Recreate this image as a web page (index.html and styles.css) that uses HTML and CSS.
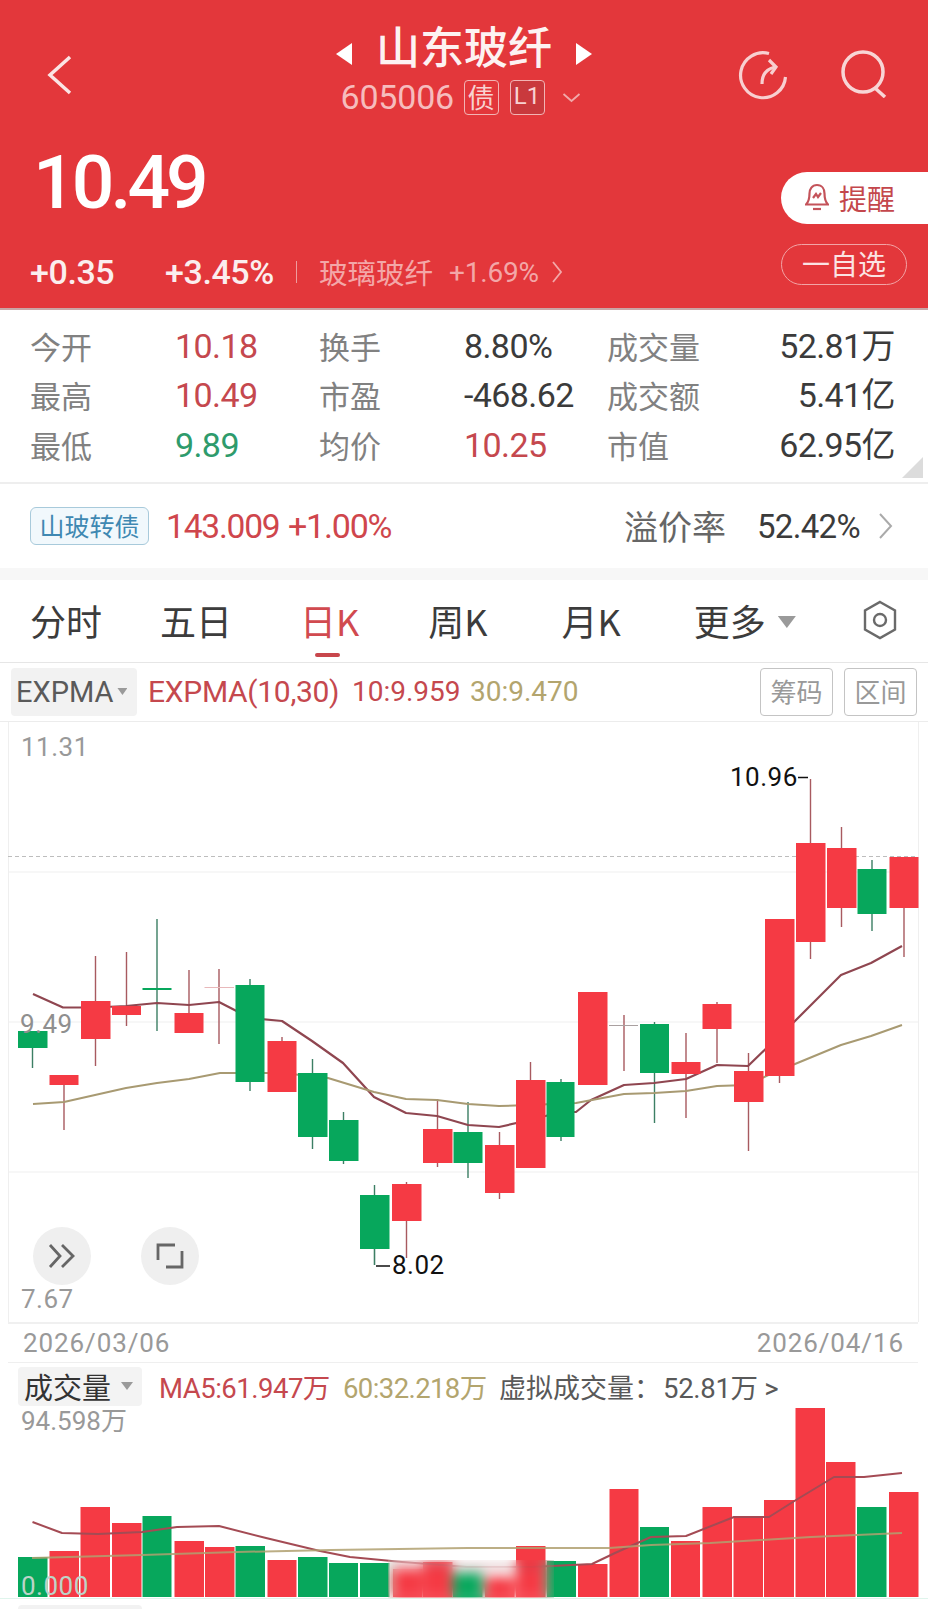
FILE: index.html
```html
<!DOCTYPE html>
<html lang="zh">
<head>
<meta charset="utf-8">
<title>山东玻纤</title>
<link rel="stylesheet" href="styles.css">
</head>
<body>
<div class="page">
  <header class="header">
    <div class="topbar">
      <svg class="back" viewBox="0 0 26 40"><path d="M23 2 3 20l20 18"/></svg>
      <div class="titlebox">
        <div class="titlerow">
          <span class="tri-l"></span>
          <h1 class="title">山东玻纤</h1>
          <span class="tri-r"></span>
        </div>
        <div class="subrow">
          <span class="code">605006</span>
          <span class="badge">债</span>
          <span class="badge badge-dark">L1</span>
          <svg class="sub-chev" viewBox="0 0 20 11"><path d="M2 2l8 7 8-7"/></svg>
        </div>
      </div>
      <div class="actions">
        <svg class="icon-refresh" viewBox="0 0 50 50"><path d="M31 3.500A22.500 22.500 0 1 0 47.500 27"/><path d="M24 34C24 25 28 19 37 17"/><path d="M31 10l7 7-5 7"/></svg>
        <svg class="icon-search" viewBox="0 0 48 48"><circle cx="23" cy="22" r="20"/><path d="M35 38l10 9"/></svg>
      </div>
    </div>
    <div class="quote">
      <div class="quote-left">
        <div class="price">10.49</div>
        <div class="changes">
          <span class="chg chg-a">+0.35</span>
          <span class="chg chg-b">+3.45%</span>
          <span class="sep"></span>
          <span class="sector">玻璃玻纤</span>
          <span class="sector-pct">+1.69%</span>
          <svg class="sector-chev" viewBox="0 0 10 22"><path d="M1 1l8 10-8 10"/></svg>
        </div>
      </div>
      <div class="quote-right">
        <div class="pill-alert">
          <svg class="bell" viewBox="0 0 24 30"><path d="M12 2c5 0 7.500 4 7.500 8.500 0 5 .5 8 3.500 11H1c3-3 3.500-6 3.500-11C4.500 6 7 2 12 2z"/><path d="M8 26h8"/><path d="M8 15l3-4 2 3 3-4"/></svg>
          <span>提醒</span>
        </div>
        <div class="pill-watch">一自选</div>
      </div>
    </div>
  </header>

  <section class="stats">
    <span class="lab">今开</span><span class="val up">10.18</span>
    <span class="lab">换手</span><span class="val">8.80%</span>
    <span class="lab">成交量</span><span class="val end">52.81万</span>
    <span class="lab">最高</span><span class="val up">10.49</span>
    <span class="lab">市盈</span><span class="val">-468.62</span>
    <span class="lab">成交额</span><span class="val end">5.41亿</span>
    <span class="lab">最低</span><span class="val down">9.89</span>
    <span class="lab">均价</span><span class="val up">10.25</span>
    <span class="lab">市值</span><span class="val end">62.95亿</span>
    <span class="corner"></span>
  </section>

  <section class="bond">
    <span class="bond-tag">山玻转债</span>
    <span class="bond-price">143.009</span>
    <span class="bond-pct">+1.00%</span>
    <span class="bond-prem">溢价率</span>
    <span class="bond-rate">52.42%</span>
    <svg class="bond-chev" viewBox="0 0 14 26"><path d="M1 1l11 12L1 25"/></svg>
  </section>

  <nav class="tabs">
    <span class="tab tab-1">分时</span>
    <span class="tab tab-2">五日</span>
    <span class="tab tab-3 active">日K</span>
    <span class="tab tab-4">周K</span>
    <span class="tab tab-5">月K</span>
    <span class="tab tab-6">更多</span>
    <span class="tab-tri"></span>
    <svg class="hex" viewBox="0 0 36 40"><path d="M18 2l15 8.500v19L18 38 3 29.500v-19z"/><circle cx="18" cy="20" r="6"/></svg>
  </nav>

  <div class="indicator">
    <div class="ind-select"><span>EXPMA</span><i class="mini-tri"></i></div>
    <span class="ind-a">EXPMA(10,30)</span>
    <span class="ind-b">10:9.959</span>
    <span class="ind-c">30:9.470</span>
    <span class="ind-btn ind-btn-1">筹码</span>
    <span class="ind-btn">区间</span>
  </div>

  <div class="chart">
    <svg class="chart-svg" viewBox="0 722 928 600">
      <g class="grid">
        <path d="M8.500 722V1322M918.500 722V1322"/>
        <path d="M8 872H918M8 1022H918M8 1172H918"/>
      </g>
      <path class="dash" d="M8 856.500H918"/>
      <path class="wick-r" d="M95.500 956V1066M126.500 952V1026M189 970V1013M219 969V1044M64 1085V1130M282 1037V1041M406.500 1182V1258M437.500 1099V1167M499.500 1132V1199M530.500 1062V1080M686 1033V1118M717 1002V1063M748.500 1053V1151M779.500 1076V1083M810.500 779V959M841.500 827V927M904 908V957M624 1015V1071"/>
      <path class="wick-g" d="M32.500 1048V1068M157 919V1031M250 979V1091M312.500 1059V1149M343.500 1112V1164M374.500 1185V1265M468 1102V1178M561 1079V1141M654.500 1022V1123M872 860V931"/>
      <path class="ma10" d="M33 994 63 1007.500 95 1007.500 126 1006 157 1003 189 1005 219 1002 250 1018 282 1021 312 1041 343 1063 374 1097 406 1113 437 1116 468 1125 499 1127 530 1120 561 1112 576 1112 591 1100 624 1085 654 1083 686 1079 717 1065 748 1066 779 1036 794 1022 811 1005 841 975 871 963 902 946"/>
      <path class="ma30" d="M33 1104 64 1102 95 1095 126 1088 157 1083 189 1079 220 1073 235 1073 282 1073 328 1078 374 1092 406 1099 437 1100 468 1104 499 1106 530 1105 576 1103 592 1100 624 1094 654 1093 686 1091 717 1086 748 1085 779 1070 795 1064 841 1045 871 1036 902 1025"/>
      <g class="red">
        <rect x="49.500" y="1075" width="29" height="10"/>
        <rect x="81" y="1001" width="29.500" height="38"/>
        <rect x="112" y="1006" width="29" height="9"/>
        <rect x="174.500" y="1013" width="29" height="20"/>
        <rect x="267.500" y="1041" width="29" height="51"/>
        <rect x="392" y="1184" width="29.500" height="37"/>
        <rect x="423" y="1129" width="29.500" height="34"/>
        <rect x="485" y="1145" width="29.500" height="48"/>
        <rect x="516" y="1080" width="29.500" height="88"/>
        <rect x="578" y="992" width="29.500" height="93"/>
        <rect x="671.500" y="1062" width="29" height="12"/>
        <rect x="702.500" y="1004" width="29" height="25"/>
        <rect x="734" y="1071" width="29.500" height="31"/>
        <rect x="765" y="919" width="29.500" height="157"/>
        <rect x="796" y="843" width="29.500" height="99"/>
        <rect x="827" y="848" width="29.500" height="60"/>
        <rect x="889.500" y="857" width="29" height="51"/>
      </g>
      <g class="green">
        <rect x="18" y="1031" width="29.500" height="17"/>
        <rect x="142.500" y="988" width="29" height="2"/>
        <rect x="235.500" y="985" width="29" height="97"/>
        <rect x="298" y="1073" width="29.500" height="64"/>
        <rect x="329" y="1120" width="29.500" height="41"/>
        <rect x="360" y="1195" width="29.500" height="54"/>
        <rect x="453.500" y="1132" width="29" height="31"/>
        <rect x="546.500" y="1082" width="28" height="55"/>
        <rect x="640" y="1024" width="29" height="49"/>
        <rect x="857.500" y="869" width="29" height="45"/>
      </g>
      <path class="doji-a" d="M204.500 987.500H234"/>
      <path class="doji-b" d="M609 1025.500H638"/>
      <path class="tick" d="M798 777.500H808M376 1266H390"/>
      <path class="tick-thin" d="M374.500 1249V1265"/>
    </svg>
    <span class="axis axis-high">11.31</span>
    <span class="axis axis-mid">9.49</span>
    <span class="axis axis-low">7.67</span>
    <span class="mark mark-high">10.96</span>
    <span class="mark mark-low">8.02</span>
    <div class="round round-1">
      <svg viewBox="0 0 28 26"><path d="M2 2l10 11L2 24M14 2l11 11-11 11"/></svg>
    </div>
    <div class="round round-2">
      <svg viewBox="0 0 28 28"><path d="M19 3H2v15M10 25h16V9"/></svg>
    </div>
  </div>

  <div class="dates">
    <span>2026/03/06</span>
    <span>2026/04/16</span>
  </div>

  <div class="volhead">
    <div class="vol-select"><span>成交量</span><i class="vol-tri"></i></div>
    <span class="vol-a">MA5:61.947万</span>
    <span class="vol-b">60:32.218万</span>
    <span class="vol-c">虚拟成交量：</span>
    <span class="vol-d">52.81万 &gt;</span>
  </div>

  <div class="volume">
    <svg class="vol-svg" viewBox="0 1408 928 190">
      <g class="red">
        <rect x="49.500" y="1551" width="29.500" height="46"/>
        <rect x="80.500" y="1507" width="29.500" height="90"/>
        <rect x="112" y="1523" width="29.500" height="74"/>
        <rect x="174.500" y="1541" width="29.500" height="56"/>
        <rect x="205" y="1547" width="29.500" height="50"/>
        <rect x="267.500" y="1560" width="29" height="37"/>
        <rect x="393" y="1569" width="29.500" height="28"/>
        <rect x="423" y="1562" width="29.500" height="35"/>
        <rect x="485" y="1577" width="29.500" height="20"/>
        <rect x="516" y="1546" width="29.500" height="51"/>
        <rect x="578" y="1564" width="29.500" height="33"/>
        <rect x="609.500" y="1489" width="29" height="108"/>
        <rect x="671" y="1541" width="29" height="56"/>
        <rect x="702.500" y="1507" width="29.500" height="90"/>
        <rect x="733.500" y="1516" width="29.500" height="81"/>
        <rect x="764" y="1500" width="30" height="97"/>
        <rect x="795.500" y="1408" width="29.500" height="189"/>
        <rect x="826" y="1462" width="29.500" height="135"/>
        <rect x="889" y="1492" width="29.500" height="105"/>
      </g>
      <g class="green">
        <rect x="18" y="1557" width="29.500" height="40"/>
        <rect x="142.500" y="1516" width="29" height="81"/>
        <rect x="235.500" y="1546" width="29.500" height="51"/>
        <rect x="298" y="1557" width="29.500" height="40"/>
        <rect x="329" y="1563" width="29" height="34"/>
        <rect x="360" y="1563" width="29.500" height="34"/>
        <rect x="453" y="1573" width="29.500" height="24"/>
        <rect x="547" y="1561" width="29" height="36"/>
        <rect x="640" y="1527" width="29" height="70"/>
        <rect x="857" y="1507" width="29.500" height="90"/>
      </g>
      <path class="vma5" d="M32.500 1522 62 1533 98 1534 142 1532 177 1527 219 1526 266 1538 320 1551 350 1557 402 1562 467 1567 532 1567 592 1564 615 1553 651 1537 686 1536 734 1517 769 1517 796 1500 834 1477 864 1477 902 1473"/>
      <path class="vma60" d="M32 1558 142 1555 237 1552 331 1550 467 1548 609 1548 651 1545 710 1543 811 1537 902 1533"/>
    </svg>
    <span class="vol-max">94.598万</span>
    <span class="vol-min">0.000</span>
    <div class="smudge"></div>
  </div>
  <div class="footer"><span class="foot-box"></span></div>
</div>
</body>
</html>
```
FILE: styles.css
```css
* { box-sizing: border-box; }
html, body { margin: 0; padding: 0; background: #fff; }
body { font-family: "Roboto", "Noto Sans CJK SC", sans-serif; color: #333; }
.page { width: 928px; height: 1609px; overflow: hidden; position: relative; }
svg { display: block; fill: none; }

/* header */
.header { height: 310px; background: #e3373b; color: #fff; border-bottom: 2px solid #c9a5a5; }
.topbar { display: grid; grid-template-columns: 1fr auto 1fr; height: 125px; padding: 0 40px; }
.back { width: 26px; height: 40px; margin: 55px 0 0 7px; }
.back path { stroke: #fbe4e4; stroke-width: 3.5; }
.titlebox { display: flex; flex-direction: column; align-items: center; padding-top: 19px; }
.titlerow { display: flex; align-items: center; gap: 24px; height: 52px; }
.title { margin: 0; font: 500 44px/52px "Noto Sans CJK SC", sans-serif; color: #fdf2f2; }
.tri-l, .tri-r { width: 16px; height: 22px; margin-top: 18px; background: #fff; }
.tri-l { clip-path: polygon(100% 0, 100% 100%, 0 50%); }
.tri-r { clip-path: polygon(0 0, 100% 50%, 0 100%); }
.subrow { display: flex; align-items: center; height: 36px; margin-top: 8px; padding-right: 6px; }
.code { font-size: 34px; line-height: 36px; color: #f6bcbd; letter-spacing: -.2px; width: 123px; }
.badge { width: 35px; height: 35px; border: 1.5px solid #f2b4b4; border-radius: 4px; font: 400 27px/31px "Noto Sans CJK SC", Roboto, sans-serif; color: #f8d2d2; text-align: center; }
.badge-dark { margin-left: 11px; background: #c9393d; font-family: Roboto, sans-serif; font-size: 24px; }
.sub-chev { width: 21px; height: 11px; margin-left: 16px; }
.sub-chev path { stroke: #f1a9aa; stroke-width: 1.8; }
.actions { display: flex; justify-content: flex-end; gap: 52px; padding-top: 50px; }
.icon-refresh { width: 50px; height: 50px; }
.icon-refresh path { stroke: #f8cfd0; stroke-width: 3.2; }
.icon-search { width: 48px; height: 48px; }
.icon-search circle, .icon-search path { stroke: #f8d5d5; stroke-width: 3.5; }

.quote { display: flex; justify-content: space-between; height: 183px; }
.quote-left { padding-left: 30px; }
.price { height: 126px; padding: 15px 0 0 3px; font-size: 75px; line-height: 84px; font-weight: 500; letter-spacing: -3.9px; color: #fff; }
.changes { display: flex; align-items: center; height: 42px; font-size: 34px; font-weight: 500; letter-spacing: -.4px; }
.chg { color: #fbeeee; }
.chg-a { width: 135px; }
.chg-b { width: 131px; }
.sep { width: 1px; height: 22px; background: #ee9c9e; margin-right: 22px; }
.sector { font: 400 28.500px/42px "Noto Sans CJK SC", sans-serif; letter-spacing: 0; color: #f3a7a8; width: 130px; }
.sector-pct { font-size: 28px; font-weight: 400; letter-spacing: -.2px; color: #f3a7a8; width: 103px; }
.sector-chev { width: 10px; height: 22px; }
.sector-chev path { stroke: #f3a7a8; stroke-width: 1.8; }
.quote-right { display: flex; flex-direction: column; align-items: flex-end; width: 147px; padding-top: 47px; }
.pill-alert { display: flex; align-items: center; width: 147px; height: 52px; padding-left: 24px; background: #fff; border-radius: 26px 0 0 26px; color: #c4474c; font: 400 28px/52px "Noto Sans CJK SC", sans-serif; gap: 10px; }
.bell { width: 24px; height: 30px; }
.bell path { stroke: #c4535a; stroke-width: 2.2; }
.pill-watch { align-self: flex-start; width: 126px; height: 41px; margin-top: 20px; border: 1.5px solid #f2a4a6; border-radius: 21px; text-align: center; font: 400 28px/37px "Noto Sans CJK SC", sans-serif; color: #fbe3e3; }

/* stats */
.stats { position: relative; display: grid; grid-template-columns: 145px 144px 145px 143px 130px 1fr; grid-auto-rows: 49.5px; align-items: center; height: 174px; padding: 11px 33px 0 30px; border-bottom: 2px solid #eee; }
.lab { font: 400 31px/40px "Noto Sans CJK SC", sans-serif; color: #818181; }
.val { font-size: 34px; line-height: 40px; letter-spacing: -.6px; color: #3b3b3b; white-space: nowrap; }
.up { color: #c5484e; }
.down { color: #2e9b6c; }
.end { text-align: right; }
.corner { position: absolute; right: 5px; bottom: 4px; width: 21px; height: 21px; background: #dcdcdc; clip-path: polygon(100% 0, 100% 100%, 0 100%); }

/* bond */
.bond { display: flex; align-items: center; height: 96px; padding-left: 30px; border-bottom: 12px solid #f7f7f7; }
.bond-tag { width: 119px; height: 38px; border: 1px solid #a8cadb; border-radius: 6px; background: #f1f8fc; text-align: center; font: 400 25px/35px "Noto Sans CJK SC", sans-serif; color: #3f88b2; }
.bond-price { margin-left: 17px; width: 122px; font-size: 33.500px; letter-spacing: -1.2px; color: #cf464c; }
.bond-pct { width: 336px; font-size: 34px; letter-spacing: -1.2px; color: #cf464c; }
.bond-prem { width: 133px; font: 400 34px/44px "Noto Sans CJK SC", sans-serif; color: #666; }
.bond-rate { width: 122px; font-size: 33px; letter-spacing: -.7px; color: #3b3b3b; }
.bond-chev { width: 14px; height: 26px; }
.bond-chev path { stroke: #aaa; stroke-width: 2; }

/* tabs */
.tabs { position: relative; display: flex; align-items: center; height: 83px; padding-bottom: 2px; border-bottom: 1px solid #e6e6e6; font: 400 36px/44px "Noto Sans CJK SC", Roboto, sans-serif; color: #3c3c3c; }
.tab { white-space: nowrap; }
.tab-1 { margin-left: 30px; }
.tab-2 { margin-left: 58px; }
.tab-3 { margin-left: 68px; }
.tab-4 { margin-left: 69px; }
.tab-5 { margin-left: 74px; }
.tab-6 { margin-left: 73px; }
.active { color: #d14a4f; position: relative; }
.active::after { content: ""; position: absolute; left: 15px; bottom: -15px; width: 25px; height: 4px; border-radius: 2px; background: #c8474c; }
.tab-tri { margin: 4px 0 0 12px; width: 18px; height: 12px; background: #9a9a9a; clip-path: polygon(0 0, 100% 0, 50% 100%); }
.hex { width: 36px; height: 40px; margin-left: 66px; }
.hex path, .hex circle { stroke: #6a6a6a; stroke-width: 2.4; }

/* indicator */
.indicator { display: flex; align-items: center; height: 59px; padding: 0 11px 1px 11px; border-bottom: 1px solid #ececec; font-size: 28px; white-space: nowrap; }
.ind-select { display: flex; align-items: center; gap: 4px; width: 126px; height: 48px; padding-left: 5px; background: #f2f2f2; border-radius: 4px; font-size: 29px; color: #5a5a5a; }
.mini-tri { width: 10px; height: 7px; background: #9a9a9a; clip-path: polygon(0 0, 100% 0, 50% 100%); }
.ind-a { margin-left: 11px; width: 204px; font-size: 30px; letter-spacing: -.3px; color: #c5484e; }
.ind-b { width: 118px; color: #c5484e; }
.ind-c { width: 290px; color: #b3a56e; }
.ind-btn { width: 73px; height: 48px; border: 1.5px solid #c4c4c4; border-radius: 4px; text-align: center; font: 400 26px/44px "Noto Sans CJK SC", sans-serif; color: #999; }
.ind-btn-1 { margin-right: 11px; }

/* candle chart */
.chart { position: relative; height: 600px; }
.chart-svg { width: 928px; height: 600px; }
.grid path { stroke: #efefef; stroke-width: 1; }
.dash { stroke: #bdbdbd; stroke-width: 1; stroke-dasharray: 4 3; }
.wick-r { stroke: #a85a60; stroke-width: 1.4; }
.wick-g { stroke: #3c7f64; stroke-width: 1.4; }
.ma10 { stroke: #8f4650; stroke-width: 2.2; stroke-linejoin: round; }
.ma30 { stroke: #a89a72; stroke-width: 2; stroke-linejoin: round; }
.red rect { fill: #f53a44; }
.green rect { fill: #07a75c; }
.doji-a { stroke: #e8b8ba; stroke-width: 1; }
.doji-b { stroke: #a9a0a0; stroke-width: 1; }
.tick { stroke: #111; stroke-width: 1.4; }
.tick-thin { stroke: #3c7f64; stroke-width: 1.2; }
.axis, .mark { position: absolute; font-size: 26px; line-height: 30px; letter-spacing: .5px; }
.axis { color: #999; left: 21px; }
.axis-high { top: 10px; }
.axis-mid { top: 287px; left: 20px; color: #8f8f8f; }
.axis-low { top: 562px; }
.mark { color: #111; }
.mark-high { left: 730px; top: 40px; }
.mark-low { left: 392px; top: 528px; }
.round { position: absolute; top: 505px; width: 58px; height: 58px; border-radius: 50%; background: #efefef; display: flex; align-items: center; justify-content: center; }
.round-1 { left: 33px; }
.round-2 { left: 141px; }
.round path { stroke: #666; stroke-width: 2.8; }
.round-1 svg { width: 28px; height: 26px; }
.round-2 svg { width: 28px; height: 28px; }

/* dates */
.dates { display: flex; justify-content: space-between; height: 41px; margin: 0 10px 0 8px; padding: 1px 14px 0 15px; border-top: 2px solid #f0f0f0; border-bottom: 1px solid #efefef; font-size: 26px; line-height: 36px; color: #999; letter-spacing: .9px; }

/* volume head */
.volhead { display: flex; align-items: center; height: 46px; padding: 0 0 0 18px; font-size: 27.500px; white-space: nowrap; }
.vol-select { display: flex; align-items: center; width: 124px; height: 39px; padding-left: 6px; background: #f3f3f3; border-radius: 4px; font: 400 29px/39px "Noto Sans CJK SC", sans-serif; color: #333; }
.vol-tri { margin-left: 10px; width: 12px; height: 8px; background: #9a9a9a; clip-path: polygon(0 0, 100% 0, 50% 100%); }
.vol-a { margin-left: 17px; width: 184px; color: #c5484e; letter-spacing: -.5px; }
.vol-b { width: 156px; color: #b3a56e; letter-spacing: -.6px; }
.vol-c { width: 164px; font-family: "Noto Sans CJK SC", sans-serif; font-size: 27px; color: #595959; }
.vol-d { color: #595959; letter-spacing: -.3px; }

/* volume chart */
.volume { position: relative; height: 190px; margin-top: -1px; }
.vol-svg { width: 928px; height: 190px; }
.vma5 { stroke: #a44b54; stroke-width: 2; stroke-linejoin: round; }
.vma60 { stroke: #b0a070; stroke-width: 2; opacity: .85; }
.vol-max { position: absolute; left: 21px; top: -2px; font-size: 26px; line-height: 30px; color: #999; }
.vol-min { position: absolute; left: 21px; top: 163px; font-size: 26px; line-height: 30px; color: #bcd4c8; letter-spacing: .5px; }
.smudge { position: absolute; left: 388px; top: 152px; width: 166px; height: 38px; backdrop-filter: blur(6px); }
.footer { height: 12px; padding: 6px 0 0 18px; background: #fff; border-top: 1px solid #dff5ec; }
.foot-box { display: block; width: 124px; height: 6px; background: #f2f2f2; border-radius: 4px 4px 0 0; }
```
